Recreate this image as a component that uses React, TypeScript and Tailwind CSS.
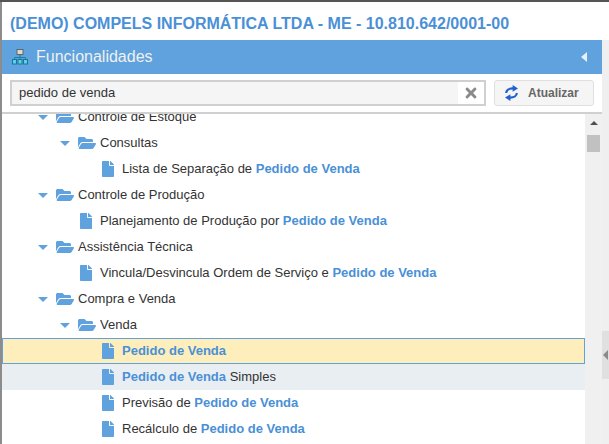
import React from "react";
import { FaFile, FaFolderOpen, FaTimes } from "react-icons/fa";

type Row = { level: number; kind: "folder" | "file"; parts: [string, boolean][]; state?: "selected" | "hover" };

const H = "Pedido de Venda";
const rows: Row[] = [
  { level: 0, kind: "folder", parts: [["Controle de Estoque", false]] },
  { level: 1, kind: "folder", parts: [["Consultas", false]] },
  { level: 2, kind: "file", parts: [["Lista de Separação de ", false], [H, true]] },
  { level: 0, kind: "folder", parts: [["Controle de Produção", false]] },
  { level: 1, kind: "file", parts: [["Planejamento de Produção por ", false], [H, true]] },
  { level: 0, kind: "folder", parts: [["Assistência Técnica", false]] },
  { level: 1, kind: "file", parts: [["Vincula/Desvincula Ordem de Serviço e ", false], [H, true]] },
  { level: 0, kind: "folder", parts: [["Compra e Venda", false]] },
  { level: 1, kind: "folder", parts: [["Venda", false]] },
  { level: 2, kind: "file", parts: [[H, true]], state: "selected" },
  { level: 2, kind: "file", parts: [[H, true], [" Simples", false]], state: "hover" },
  { level: 2, kind: "file", parts: [["Previsão de ", false], [H, true]] },
  { level: 2, kind: "file", parts: [["Recálculo de ", false], [H, true]] },
];

function SiteMap() {
  return (
    <svg width="16" height="16" viewBox="0 0 16 16" className="shrink-0">
      <rect x="5" y="0.5" width="6" height="5" fill="#e4d9c0" stroke="#5a6670" />
      <path d="M8 6v5M2.5 11V8.5h11V11" stroke="#1c7f9e" fill="none" />
      <rect x="0.5" y="10.5" width="4" height="4.5" fill="#5fd0ea" stroke="#16779a" />
      <rect x="6" y="10.5" width="4" height="4.5" fill="#5fd0ea" stroke="#16779a" />
      <rect x="11.5" y="10.5" width="4" height="4.5" fill="#5fd0ea" stroke="#16779a" />
    </svg>
  );
}

function RefreshIcon() {
  return (
    <svg width="13" height="16" viewBox="0 0 13 16" className="shrink-0" fill="#2160d0">
      <path d="M1.2 8C1.2 5.2 4 3.4 8 3.4" fill="none" stroke="#2160d0" strokeWidth="2.2" />
      <path d="M7.6 0L13 3.4L7.6 6.8Z" />
      <path d="M11.8 8C11.8 10.8 9 12.6 5 12.6" fill="none" stroke="#2160d0" strokeWidth="2.2" />
      <path d="M5.4 9.2L0 12.6L5.4 16Z" />
    </svg>
  );
}

function TreeRow({ row }: { row: Row }) {
  const bg =
    row.state === "selected"
      ? "bg-[#fdeebb] ring-1 ring-inset ring-[#5fa2dd]"
      : row.state === "hover"
        ? "bg-[#e9eef3]"
        : "";
  const indent = row.level === 0 ? "pl-[36px]" : row.level === 1 ? "pl-[58px]" : "pl-[80px]";
  return (
    <div className={`h-[26px] flex items-center ${indent} ${bg}`}>
      {row.kind === "folder" ? (
        <>
          <span className="w-0 h-0 border-x-[5px] border-x-transparent border-t-[5px] border-t-[#5fa2dd] mr-[8px] shrink-0" />
          <FaFolderOpen className="text-[#5fa2dd] shrink-0 mr-[4px]" size={18} />
        </>
      ) : (
        <>
          <span className="w-[14px] shrink-0" />
          <FaFile className="text-[#5fa2dd] shrink-0 ml-[4px] mr-[6px]" size={16} />
        </>
      )}
      <span className="text-[13px] whitespace-pre text-[#333]">
        {row.parts.map(([t, b], i) =>
          b ? (
            <b key={i} className="font-bold text-[#4a90d6]">{t}</b>
          ) : (
            <span key={i}>{t}</span>
          ),
        )}
      </span>
    </div>
  );
}

export default function App() {
  return (
    <div
      className="w-[609px] h-[444px] overflow-hidden bg-white flex flex-col border-t-2 border-t-[#555] "
      style={{ fontFamily: '"Liberation Sans", Arial, sans-serif' }}
    >
      <div className="flex-1 flex flex-col min-h-0 border-l-2 border-l-[#8c8c8c]">
        <div className="h-[38px] shrink-0 flex items-center pl-2 pt-[6px] text-[16px] font-bold text-[#4a90d6] whitespace-nowrap">
          (DEMO) COMPELS INFORMÁTICA LTDA - ME - 10.810.642/0001-00
        </div>
        <div className="flex-1 flex min-h-0">
          <div className="flex-1 min-w-0 flex flex-col">
            <div className="h-[34px] bg-[#5fa2dd] flex items-center pl-[10px] pr-[15px] shrink-0">
              <SiteMap />
              <span className="ml-[8px] text-[16px] text-[#f0f0f0] flex-1">Funcionalidades</span>
              <span className="w-0 h-0 border-y-[5px] border-y-transparent border-r-[6px] border-r-[#e8f0f8]" />
            </div>
            <div className="h-[40px] flex items-start pt-[6px] pl-2 pr-2 shrink-0 border-b-2 border-b-[#d0d0d0]">
              <div className="w-[476px] h-[26px] border-2 border-[#d0d0d0] bg-[#f5f5f5] flex items-center">
                <span className="flex-1 pl-[7px] text-[13px] text-[#333]">pedido de venda</span>
                <span className="w-[26px] h-full bg-white flex items-center justify-center">
                  <FaTimes className="text-[#8a8a8a]" size={16} />
                </span>
              </div>
              <div className="ml-2 w-[100px] h-[26px] border border-[#e0e0e0] rounded-[3px] bg-[#f5f5f5] flex items-center pl-[10px]">
                <RefreshIcon />
                <span className="ml-[10px] text-[12px] font-bold text-[#666]">Atualizar</span>
              </div>
            </div>
            <div className="flex-1 min-h-0 flex">
              <div className="flex-1 min-w-0 overflow-hidden">
                <div className="-mt-[10px]">
                  {rows.map((r, i) => (
                    <TreeRow key={i} row={r} />
                  ))}
                </div>
              </div>
              <div className="w-[17px] bg-[#f0f0f0] shrink-0 flex flex-col items-center">
                <span className="mt-[7px] w-0 h-0 border-x-[4px] border-x-transparent border-b-[4px] border-b-[#505050]" />
                <span className="mt-[10px] w-[13px] h-[17px] bg-[#c1c1c1]" />
              </div>
            </div>
          </div>
          <div className="w-[7px] bg-[#efefef] shrink-0 flex flex-col">
            <div className="mt-[291px] h-[48px] bg-[#e0e0e0] flex items-center justify-center">
              <span className="w-0 h-0 border-y-[5px] border-y-transparent border-r-[5px] border-r-[#8a8a8a]" />
            </div>
          </div>
        </div>
      </div>
    </div>
  );
}
